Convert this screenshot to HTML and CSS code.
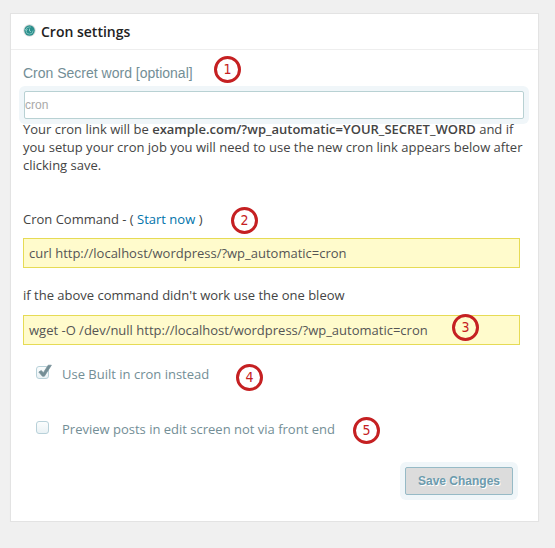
FILE: index.html
```html
<!DOCTYPE html>
<html lang="en">
<head>
<meta charset="utf-8">
<title>Cron settings</title>
<link rel="stylesheet" href="styles.css">
</head>
<body>
<section class="panel">
  <h2 class="panel-title">
    <svg class="icon" viewBox="0 0 13 13"><circle cx="6.5" cy="6.5" r="6.2" fill="#dedede"/><circle cx="6.5" cy="6.5" r="5.2" fill="#2a8f8c"/><circle cx="6.5" cy="6.5" r="3.6" fill="none" stroke="#8cc9c5" stroke-width=".8" stroke-dasharray="18 4"/><path d="M2.2 5.2L3.4 6.6L4.6 5.4M6.5 4.6V7L8 7.8" fill="none" stroke="#a5dbd7" stroke-width=".8"/></svg>
    <span>Cron settings</span>
  </h2>
  <div class="content">
    <label class="field-label" for="secret">Cron Secret word [optional]<span class="badge b1">1</span></label>
    <input class="field" id="secret" type="text" placeholder="cron">
    <p class="description">Your cron link will be <b>example.com/?wp_automatic=YOUR_SECRET_WORD</b> and if<br>you setup your cron job you will need to use the new cron link appears below after<br>clicking save.</p>
    <p class="command-title">Cron Command - ( <a href="#">Start now</a> )<span class="badge b2">2</span></p>
    <div class="code">curl http://localhost/wordpress/?wp_automatic=cron</div>
    <p class="alternative">if the above command didn't work use the one bleow</p>
    <div class="code">wget -O /dev/null http://localhost/wordpress/?wp_automatic=cron<span class="badge b3">3</span></div>
    <div class="option first">
      <span class="box"><svg class="check" viewBox="0 0 15 15"><path d="M1.8 8L4.2 6.5L6.4 8.7L11.2 1.2L14.4 1.2L7.4 12.2L5.4 12.2Z" fill="#748e96" stroke="#748e96" stroke-width=".7"/></svg></span>
      <span>Use Built in cron instead</span><span class="badge b4">4</span>
    </div>
    <div class="option">
      <span class="box"></span>
      <span>Preview posts in edit screen not via front end</span><span class="badge b5">5</span>
    </div>
    <div class="actions"><button class="save" type="button">Save Changes</button></div>
  </div>
</section>
</body>
</html>
```
FILE: styles.css
```css
* { box-sizing: border-box; }
body {
  margin: 0;
  padding: 13px 0 0 10px;
  background: #f0f0f0;
  color: #444;
  font: 13px/18px "Open Sans", sans-serif;
}
p { margin: 0; }
.panel {
  width: 529px;
  height: 509px;
  background: #fff;
  border: 1px solid #e3e3e3;
  box-shadow: 0 1px 1px rgba(0, 0, 0, .04);
}
.panel-title {
  display: flex;
  gap: 5px;
  height: 36px;
  margin: 0;
  padding: 8px 12px 0;
  border-bottom: 1px solid #eee;
  color: #222;
  font-size: 14px;
  font-weight: 600;
  line-height: 20px;
}
.icon { width: 13px; height: 13px; margin-top: 2px; }
.content { padding: 14px 14px 0 12px; }
.field-label {
  display: block;
  position: relative;
  height: 18px;
  color: #738e96;
  font: 14px/18px "Liberation Sans", sans-serif;
}
.field {
  display: block;
  width: 500px;
  height: 28px;
  margin: 9px 0 0 1px;
  padding: 0;
  border: 1px solid #b8d1d3;
  border-radius: 2px;
  box-shadow: 0 0 0 5px #f0f6f9;
  font: 12px "Liberation Sans", sans-serif;
}
.field::placeholder { color: #a9a9a9; opacity: 1; }
.description { position: relative; margin-top: 1px; white-space: nowrap; }
.description b { font-weight: 600; }
.command-title { position: relative; margin: 36px 0 10px; }
.command-title a { color: #0073aa; text-decoration: none; }
.code {
  position: relative;
  width: 497px;
  height: 30px;
  padding: 5px;
  background: #fffbcc;
  border: 1px solid #e6db55;
  color: #555;
}
.alternative { margin: 18px 0 11px; }
.option {
  display: flex;
  position: relative;
  gap: 13px;
  height: 18px;
  margin: 37px 0 0 13px;
  color: #738e96;
}
.option.first { margin-top: 20px; }
.box {
  position: relative;
  width: 13px;
  height: 13px;
  margin-top: 1px;
  border: 1px solid #b8d1d9;
  border-radius: 3px;
  background: linear-gradient(#fbfdfd, #eaf2f5);
}
.check { position: absolute; top: -3px; left: 0; width: 15px; height: 15px; }
.badge {
  position: absolute;
  width: 27px;
  height: 27px;
  border: 3px solid #c52022;
  border-radius: 50%;
  background: #fff;
  color: #c52022;
  font: 14px/21px "DejaVu Sans Condensed", "DejaVu Sans", sans-serif;
  text-align: center;
}
.b1 { left: 191px; top: -8px; }
.b2 { left: 208px; top: -3px; }
.b3 { left: 428px; top: -2px; background: #fffbcc; }
.b4 { left: 200px; top: -1px; }
.b5 { left: 317px; top: -3px; }
.actions { display: flex; justify-content: flex-end; margin: 29px 11px 0 0; }
.save {
  width: 108px;
  height: 28px;
  padding: 0;
  border: 1px solid #96bac6;
  border-radius: 2px;
  background: #dcdcdc;
  box-shadow: 0 0 0 5px #f0f6f9;
  color: #6c9bad;
  font: bold 12px "Liberation Sans", sans-serif;
  text-shadow: 1px 1px 0 #fff;
}
```
